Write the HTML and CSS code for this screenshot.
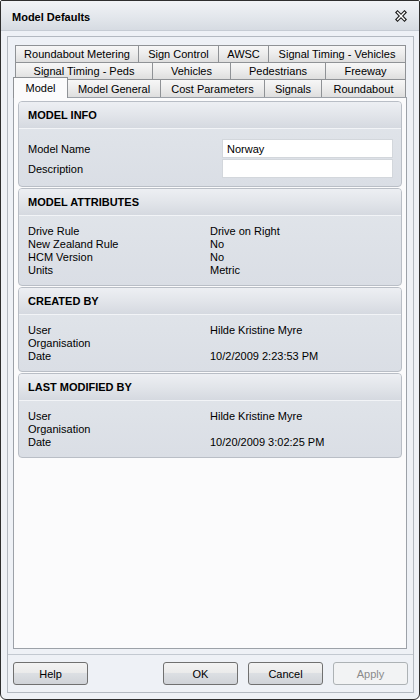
FILE: index.html
```html
<!DOCTYPE html>
<html>
<head>
<meta charset="utf-8">
<title>Model Defaults</title>
<link rel="stylesheet" href="styles.css">
</head>
<body>
<div class="window">
  <div class="titlebar">
    <span class="title">Model Defaults</span>
    <svg class="close" width="12" height="12" viewBox="0 0 12 12">
      <path d="M2.5 2.5 L9.5 9.5 M9.5 2.5 L2.5 9.5" stroke="#1e1e1e" stroke-width="3.6" stroke-linecap="square"/>
      <path d="M2.6 2.6 L9.4 9.4 M9.4 2.6 L2.6 9.4" stroke="#ffffff" stroke-width="1.4" stroke-linecap="square"/>
    </svg>
  </div>
  <div class="frame">
    <div class="tabarea">
      <div class="tabrow row1">
        <div class="tab first t-rm">Roundabout Metering</div>
        <div class="tab t-sc">Sign Control</div>
        <div class="tab t-aw">AWSC</div>
        <div class="tab t-stv">Signal Timing - Vehicles</div>
      </div>
      <div class="tabrow row2">
        <div class="tab first t-stp">Signal Timing - Peds</div>
        <div class="tab t-ve">Vehicles</div>
        <div class="tab t-pe">Pedestrians</div>
        <div class="tab t-fw">Freeway</div>
      </div>
      <div class="tabrow row3">
        <div class="tab first active t-mo">Model</div>
        <div class="tab t-mg">Model General</div>
        <div class="tab t-cp">Cost Parameters</div>
        <div class="tab t-si">Signals</div>
        <div class="tab t-ro">Roundabout</div>
      </div>
      <div class="pane">
        <section class="group">
          <div class="ghead">MODEL INFO</div>
          <div class="gbody info">
            <div class="field"><span class="lbl">Model Name</span><div class="input">Norway</div></div>
            <div class="field"><span class="lbl">Description</span><div class="input"></div></div>
          </div>
        </section>
        <section class="group">
          <div class="ghead">MODEL ATTRIBUTES</div>
          <div class="gbody">
            <div class="row"><span>Drive Rule</span><span>Drive on Right</span></div>
            <div class="row"><span>New Zealand Rule</span><span>No</span></div>
            <div class="row"><span>HCM Version</span><span>No</span></div>
            <div class="row"><span>Units</span><span>Metric</span></div>
          </div>
        </section>
        <section class="group">
          <div class="ghead">CREATED BY</div>
          <div class="gbody">
            <div class="row"><span>User</span><span>Hilde Kristine Myre</span></div>
            <div class="row"><span>Organisation</span><span></span></div>
            <div class="row"><span>Date</span><span>10/2/2009 2:23:53 PM</span></div>
          </div>
        </section>
        <section class="group">
          <div class="ghead">LAST MODIFIED BY</div>
          <div class="gbody">
            <div class="row"><span>User</span><span>Hilde Kristine Myre</span></div>
            <div class="row"><span>Organisation</span><span></span></div>
            <div class="row"><span>Date</span><span>10/20/2009 3:02:25 PM</span></div>
          </div>
        </section>
      </div>
    </div>
    <div class="buttons">
      <button class="btn">Help</button>
      <div class="btngroup">
        <button class="btn">OK</button>
        <button class="btn">Cancel</button>
        <button class="btn disabled">Apply</button>
      </div>
    </div>
  </div>
</div>
</body>
</html>
```

FILE: styles.css
```css
* { box-sizing: border-box; }
html, body { margin: 0; padding: 0; background: #ffffff; }
body {
  font-family: "Liberation Sans", Arial, sans-serif;
  font-size: 11px;
  color: #000;
}
.window {
  width: 420px;
  height: 700px;
  border: 1px solid #2e2e2e;
  border-radius: 2px 2px 6px 6px;
  background: #eef1f6;
  overflow: hidden;
}
.titlebar {
  height: 30px;
  display: flex;
  align-items: center;
  justify-content: space-between;
  padding: 0 11px 0 11px;
  background: linear-gradient(to bottom, #f1f3f6 0%, #e3e7ec 55%, #d6dbe2 100%);
  border-bottom: 1px solid #c6ccd4;
}
.title { font-weight: bold; font-size: 11px; padding-top: 3px; }
.close { display: block; margin-top: 1px; margin-right: 1px; }
.frame {
  margin: 5px 0 0 6px;
  width: 407px;
  height: 657px;
  border: 1px solid #b3b9c1;
  background: #eef1f6;
}
.tabarea {
  padding: 8px 6px 5px 5px;
  border-bottom: 1px solid #c3c9d1;
}
.tabrow { display: flex; }
.row1, .row2 { margin-left: 2px; width: 391px; height: 17px; }
.row3 { width: 393px; height: 18px; }
.tab {
  flex: none;
  height: 100%;
  border-top: 1px solid #8f9296;
  border-right: 1px solid #8f9296;
  background: linear-gradient(to bottom, #f7f7f7 0%, #ececec 50%, #dedede 100%);
  text-align: center;
  padding-top: 1px;
  line-height: 15px;
  white-space: nowrap;
}
.row3 .tab { line-height: 17px; }
.tab.first { border-left: 1px solid #8f9296; }
.tab.active {
  position: relative;
  z-index: 2;
  margin-top: -2px;
  height: 21px;
  background: #fbfbfc;
  line-height: 18px;
}
.t-rm { width: 124px; }
.t-sc { width: 80px; }
.t-aw { width: 50px; }
.t-stv { width: 137px; }
.t-stp { width: 138px; }
.t-ve { width: 78px; }
.t-pe { width: 95px; }
.t-fw { width: 80px; }
.t-mo { width: 55px; }
.t-mg { width: 93px; }
.t-cp { width: 104px; }
.t-si { width: 57px; }
.t-ro { width: 84px; }
.pane {
  width: 394px;
  height: 552px;
  border: 1px solid #9ca1a8;
  background: #fbfbfc;
  padding: 3px 4px;
  display: flex;
  flex-direction: column;
  gap: 1px;
}
.group {
  border: 1px solid #b9bec6;
  border-radius: 4px;
  overflow: hidden;
  background: linear-gradient(to bottom, #e2e6eb 0%, #dadee5 100%);
}
.ghead {
  height: 27px;
  border-bottom: 1px solid #f2f4f7;
  background: linear-gradient(to bottom, #edeff3 0%, #e2e5ea 50%, #d5d9e0 100%);
  font-weight: bold;
  line-height: 26px;
  padding-left: 9px;
}
.gbody {
  padding: 9px 9px 8px 9px;
  line-height: 13px;
}
.gbody.info { padding-top: 10px; padding-bottom: 8px; }
.row {
  display: grid;
  grid-template-columns: 182px 1fr;
  height: 13px;
}
.field {
  display: grid;
  grid-template-columns: 194px 171px;
  align-items: center;
  height: 19px;
}
.lbl { padding-top: 2px; }
.field + .field { margin-top: 1px; }
.input {
  height: 19px;
  border: 1px solid #d3d7dc;
  background: #ffffff;
  padding: 1px 0 0 4px;
  line-height: 16px;
}
.buttons {
  display: flex;
  padding: 7px 5px 7px 5px;
}
.btngroup { margin-left: auto; display: flex; gap: 10px; }
.btn {
  width: 75px;
  height: 23px;
  padding: 0;
  font-family: "Liberation Sans", Arial, sans-serif;
  font-size: 11px;
  color: #000;
  border: 1px solid #707070;
  border-radius: 3px;
  background: linear-gradient(to bottom, #f3f3f3 0%, #ebebeb 45%, #dcdfe3 50%, #d0d3d8 100%);
}
.btn.disabled {
  color: #8a8a8a;
  border-color: #adb2b5;
  background: #f2f3f4;
}
```
